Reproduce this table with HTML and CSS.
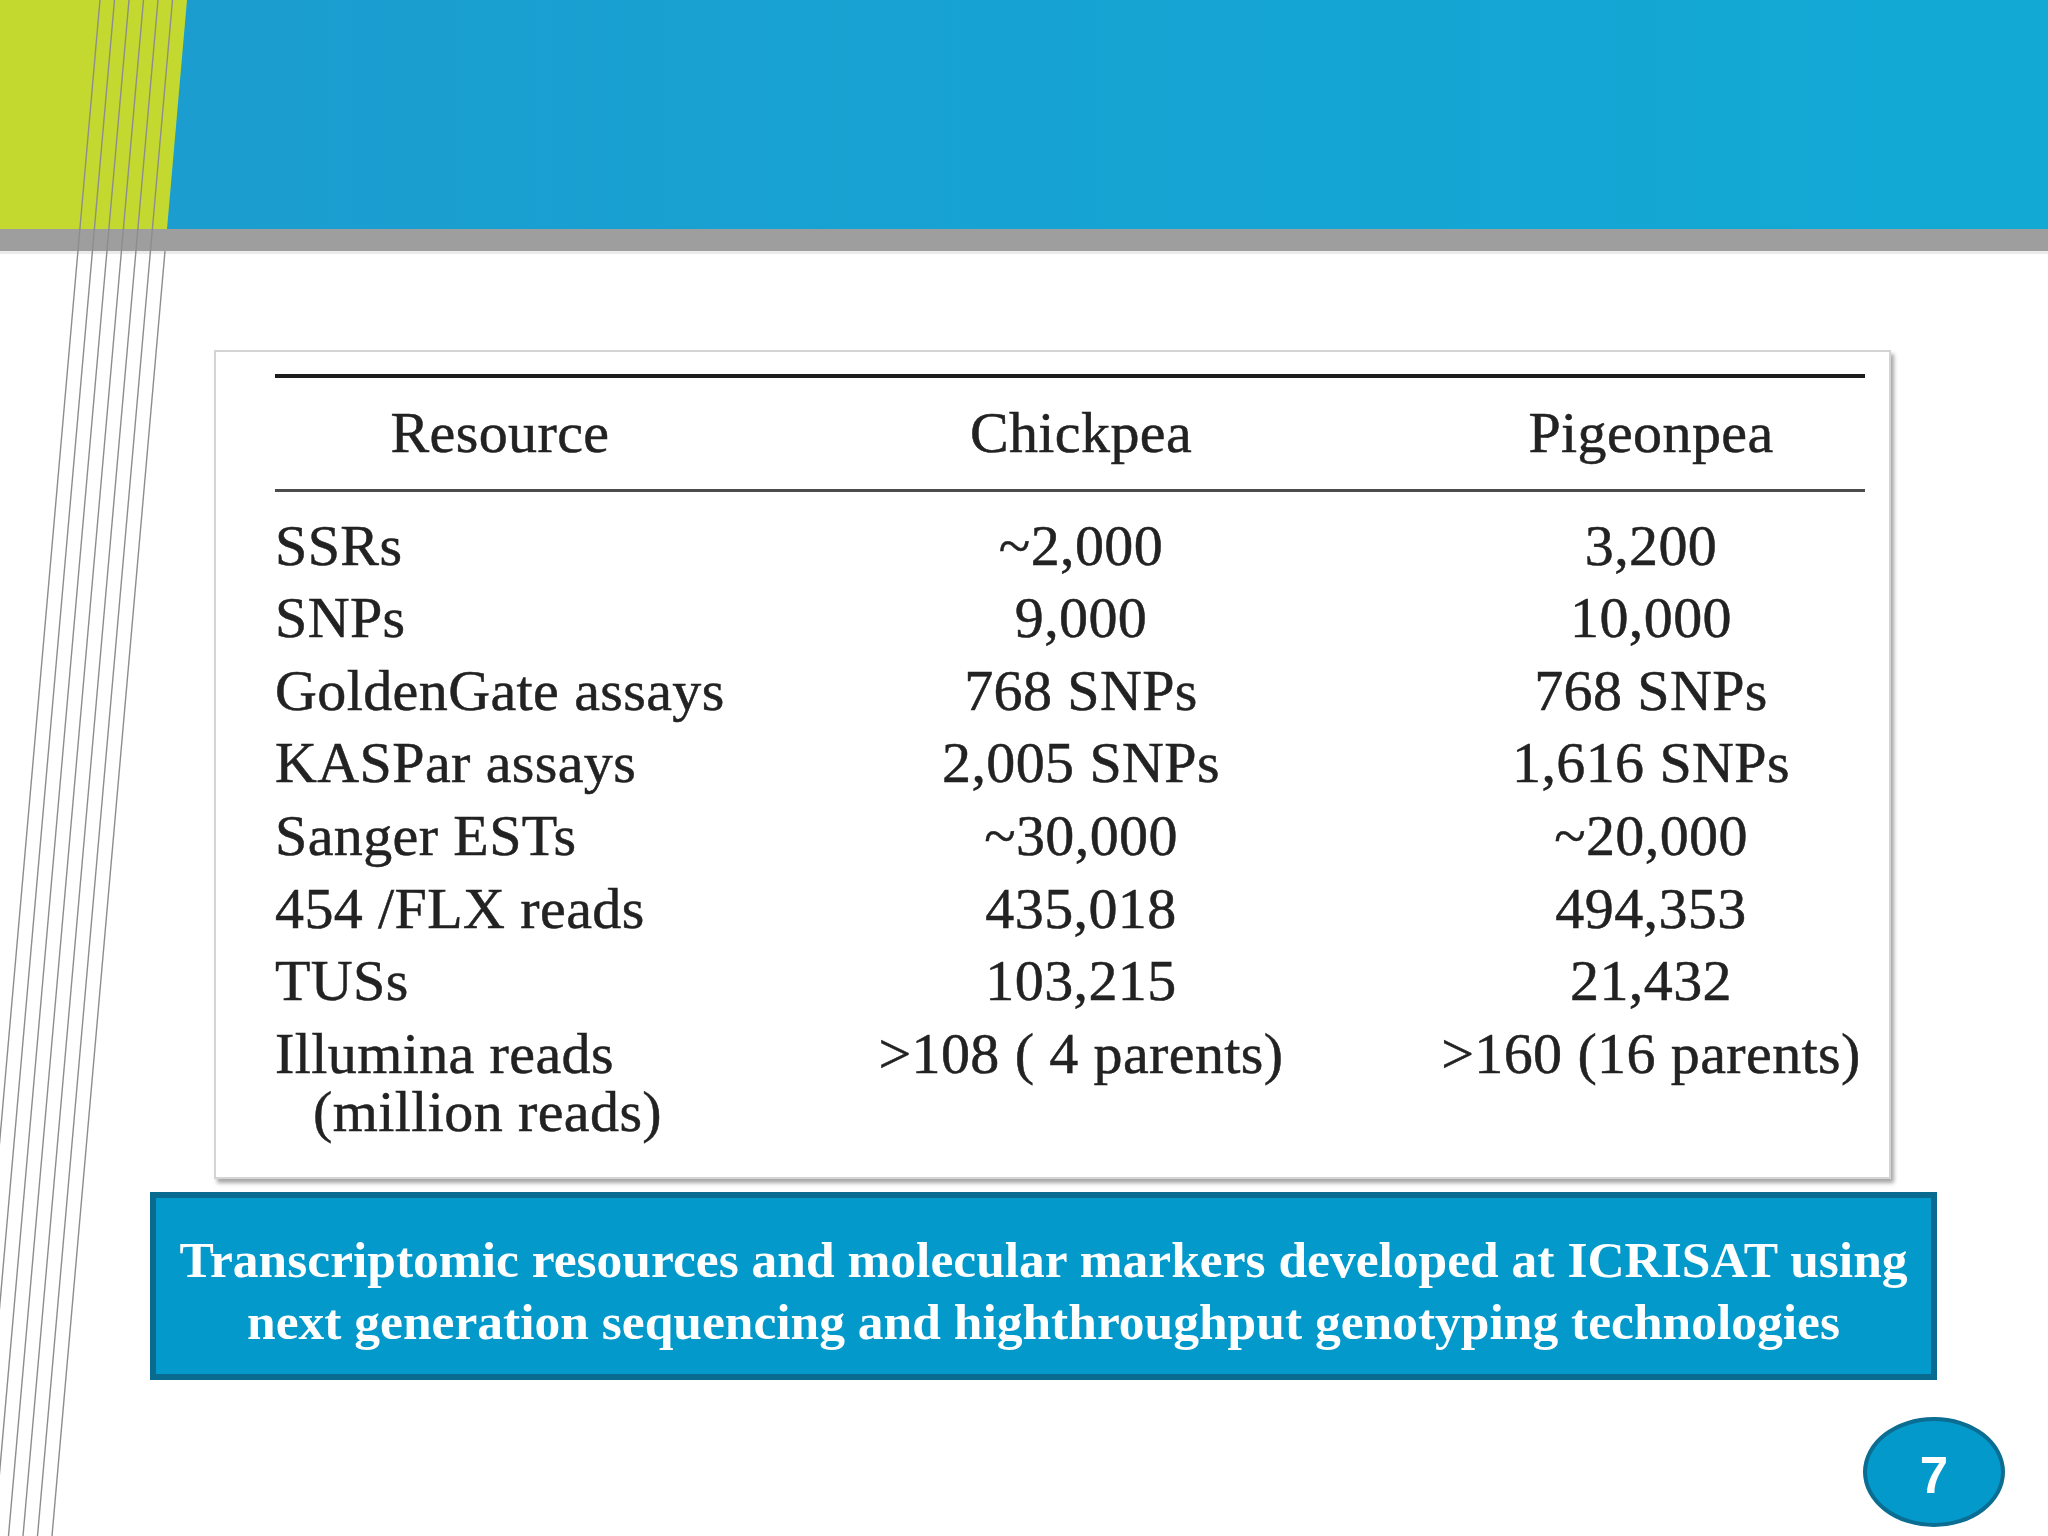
FILE: index.html
```html
<!DOCTYPE html>
<html lang="en">
<head>
<meta charset="utf-8">
<title>Transcriptomic resources</title>
<link rel="stylesheet" href="styles.css">
</head>
<body>
<div class="slide">
  <header class="band"></header>
  <div class="band-rule"></div>

  <svg class="deco" width="260" height="1536" viewBox="0 0 260 1536" aria-hidden="true">
    <polygon points="0,0 187,0 167,229 0,229" fill="#c3d92f"/>
    <g stroke="#8d8d8d" stroke-width="1.4" fill="none">
      <line x1="100" y1="0" x2="-35" y2="1536"/>
      <line x1="114.5" y1="0" x2="-20.5" y2="1536"/>
      <line x1="129" y1="0" x2="-6" y2="1536"/>
      <line x1="143.5" y1="0" x2="8.5" y2="1536"/>
      <line x1="158" y1="0" x2="23" y2="1536"/>
      <line x1="172.5" y1="0" x2="37.5" y2="1536"/>
      <line x1="165" y1="251" x2="52" y2="1536"/>
    </g>
  </svg>

  <main class="content">
    <section class="table-card">
      <div class="rule-top"></div>
      <div class="grid head">
        <div class="c1 centered">Resource</div>
        <div class="c2">Chickpea</div>
        <div class="c3">Pigeonpea</div>
      </div>
      <div class="rule-mid"></div>
      <div class="grid body">
        <div class="c1">SSRs</div><div class="c2">~2,000</div><div class="c3">3,200</div>
        <div class="c1">SNPs</div><div class="c2">9,000</div><div class="c3">10,000</div>
        <div class="c1">GoldenGate assays</div><div class="c2">768 SNPs</div><div class="c3">768 SNPs</div>
        <div class="c1">KASPar assays</div><div class="c2">2,005 SNPs</div><div class="c3">1,616 SNPs</div>
        <div class="c1">Sanger ESTs</div><div class="c2">~30,000</div><div class="c3">~20,000</div>
        <div class="c1">454 /FLX reads</div><div class="c2">435,018</div><div class="c3">494,353</div>
        <div class="c1">TUSs</div><div class="c2">103,215</div><div class="c3">21,432</div>
        <div class="c1">Illumina reads<div class="sub">(million reads)</div></div><div class="c2">&gt;108 ( 4 parents)</div><div class="c3">&gt;160 (16 parents)</div>
      </div>
    </section>

    <div class="caption">
      <p>Transcriptomic resources and molecular markers developed at ICRISAT using</p>
      <p>next generation sequencing and highthroughput genotyping technologies</p>
    </div>

    <div class="page-num">7</div>
  </main>
</div>
</body>
</html>
```

FILE: styles.css
```css
html, body {
  margin: 0;
  padding: 0;
  background: #ffffff;
}

.slide {
  position: relative;
  width: 2048px;
  height: 1536px;
  overflow: hidden;
  background: #ffffff;
}

.band {
  height: 229px;
  background: linear-gradient(90deg, #1d9bcf 0%, #16a3d3 50%, #12a9d5 100%);
}

.band-rule {
  height: 22px;
  background: #9e9e9e;
  border-bottom: 3px solid #ebebeb;
}

.deco {
  position: absolute;
  left: 0;
  top: 0;
  pointer-events: none;
}

.content {
  padding-top: 96px;
}

/* table card */
.table-card {
  box-sizing: border-box;
  width: 1677px;
  height: 829px;
  margin-left: 214px;
  padding: 22px 24px 0 59px;
  background: #ffffff;
  border: 2px solid #d4d4d4;
  box-shadow: 3px 4px 4px rgba(0, 0, 0, 0.35);
  font-family: "Liberation Serif", "Times New Roman", serif;
  font-size: 58px;
  color: #222222;
  -webkit-text-stroke: 0.5px #222222;
}

.rule-top {
  height: 4px;
  background: #1c1c1c;
}

.rule-mid {
  height: 3px;
  background: #4c4c4c;
}

.grid {
  display: grid;
  grid-template-columns: 450px 712px 428px;
  line-height: 72.6px;
  white-space: nowrap;
  letter-spacing: 0.4px;
}

.head {
  padding: 19px 0 19px;
}

.body {
  padding-top: 18px;
}

.c1 {
  text-align: left;
}

.c1.centered {
  text-align: center;
}

.c2, .c3 {
  text-align: center;
}

.sub {
  line-height: 44px;
  padding-left: 38px;
}

/* caption */
.caption {
  box-sizing: border-box;
  width: 1787px;
  height: 188px;
  margin: 13px 0 0 150px;
  background: #0399cb;
  border: 6px solid #0a6b90;
  display: flex;
  flex-direction: column;
  justify-content: center;
  align-items: center;
  font-family: "Liberation Serif", "Times New Roman", serif;
  font-weight: bold;
  font-size: 51.5px;
  line-height: 62px;
  color: #ffffff;
  padding-top: 10px;
}

.caption p {
  margin: 0;
  white-space: nowrap;
}

/* page number */
.page-num {
  box-sizing: border-box;
  width: 142px;
  height: 110px;
  margin: 37px 0 0 1863px;
  padding-top: 6px;
  border-radius: 50%;
  background: #0399cb;
  border: 4px solid #0b6d92;
  display: flex;
  align-items: center;
  justify-content: center;
  font-family: "Liberation Sans", Arial, sans-serif;
  font-weight: bold;
  font-size: 51px;
  color: #ffffff;
}
```
